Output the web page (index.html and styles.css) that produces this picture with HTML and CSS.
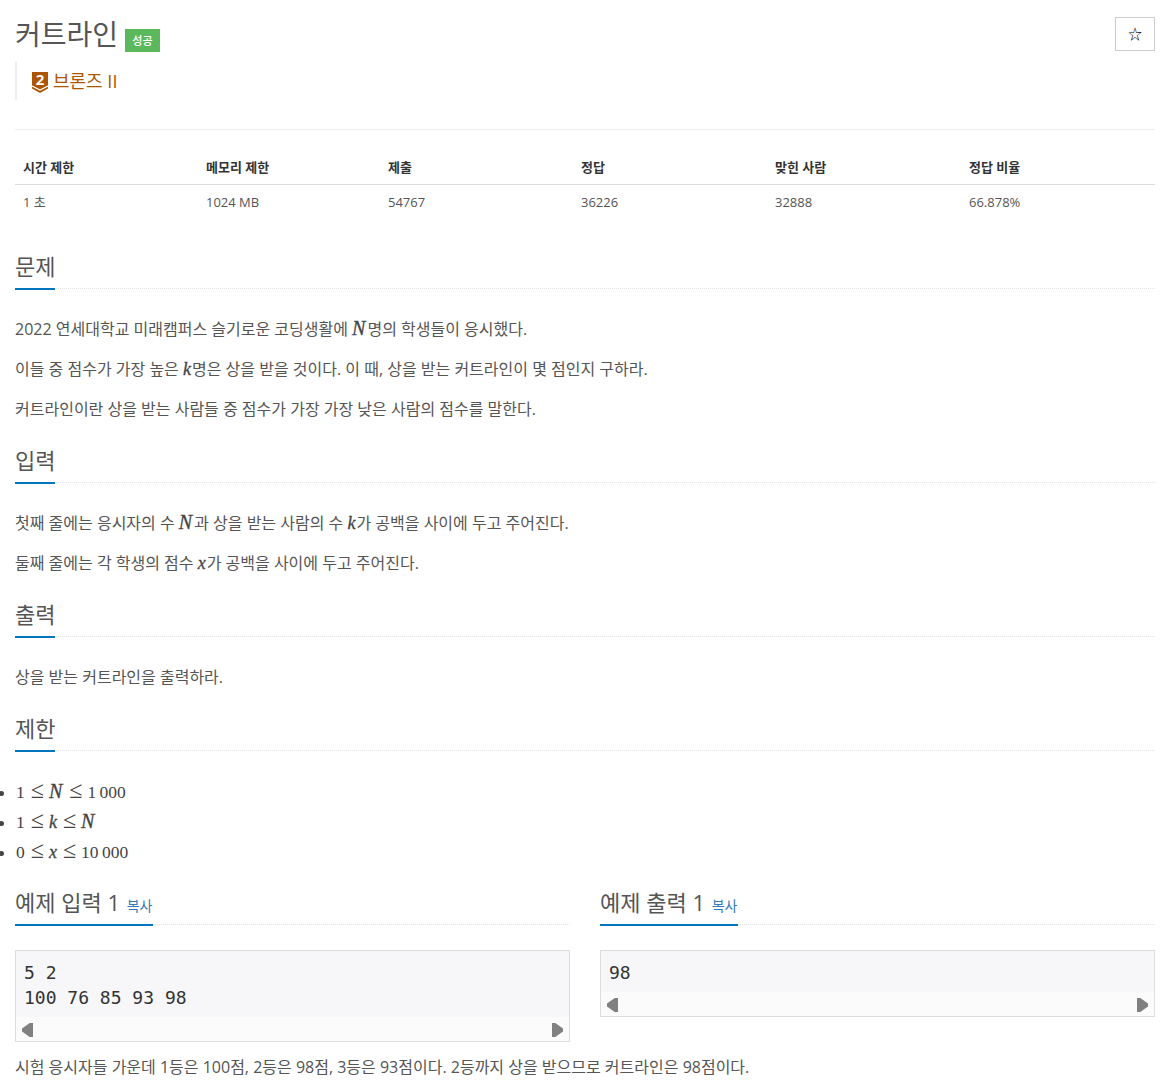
FILE: index.html
```html
<!DOCTYPE html>
<html lang="ko">
<head>
  <meta charset="UTF-8" />
  <meta name="viewport" content="width=device-width, initial-scale=1.0"/>
  <title>커트라인</title>
  <link rel="stylesheet" href="styles.css">
</head>
<body>

  <div class="page-header">
    <h1>커트라인 <span class="label-success">성공</span></h1>
    <button class="star-btn">☆</button>
  </div>

  <blockquote class="tier">
    <svg class="tier-icon" viewBox="0 0 16 21" width="16" height="21">
      <path d="M0 0H16V16.5L8 21L0 16.5Z" fill="#ad5600"/>
      <path d="M0 14L8 18L16 14" fill="none" stroke="#fff" stroke-width="1.3"/>
      <text x="8" y="13" class="tier-num">2</text>
    </svg>
    <span>브론즈 II</span>
  </blockquote>

  <div class="divider"></div>

  <table class="info">
    <colgroup>
      <col class="c1"><col class="c2"><col class="c3"><col class="c4"><col class="c5"><col class="c6">
    </colgroup>
    <thead>
      <tr><th>시간 제한</th><th>메모리 제한</th><th>제출</th><th>정답</th><th>맞힌 사람</th><th>정답 비율</th></tr>
    </thead>
    <tbody>
      <tr><td>1 초</td><td>1024 MB</td><td>54767</td><td>36226</td><td>32888</td><td>66.878%</td></tr>
    </tbody>
  </table>

  <section class="sec first">
    <div class="headline"><h2>문제</h2></div>
    <p>2022 연세대학교 미래캠퍼스 슬기로운 코딩생활에 <i class="m">N</i>명의 학생들이 응시했다.</p>
    <p>이들 중 점수가 가장 높은 <i class="m low">k</i>명은 상을 받을 것이다. 이 때, 상을 받는 커트라인이 몇 점인지 구하라.</p>
    <p>커트라인이란 상을 받는 사람들 중 점수가 가장 가장 낮은 사람의 점수를 말한다.</p>
  </section>

  <section class="sec">
    <div class="headline"><h2>입력</h2></div>
    <p>첫째 줄에는 응시자의 수 <i class="m">N</i>과 상을 받는 사람의 수 <i class="m low">k</i>가 공백을 사이에 두고 주어진다.</p>
    <p>둘째 줄에는 각 학생의 점수 <i class="m low">x</i>가 공백을 사이에 두고 주어진다.</p>
  </section>

  <section class="sec">
    <div class="headline"><h2>출력</h2></div>
    <p>상을 받는 커트라인을 출력하라.</p>
  </section>

  <section class="sec">
    <div class="headline"><h2>제한</h2></div>
    <ul class="limits">
      <li>1<span class="op">≤</span><i class="m">N</i><span class="op">≤</span>1 000</li>
      <li>1<span class="op">≤</span><i class="m low">k</i><span class="op">≤</span><i class="m">N</i></li>
      <li>0<span class="op">≤</span><i class="m low">x</i><span class="op">≤</span>10 000</li>
    </ul>
  </section>

  <div class="samples">
    <div class="sample">
      <div class="headline"><h2>예제 입력 1 <a class="copy">복사</a></h2></div>
      <div class="pre-box">
        <pre>5 2
100 76 85 93 98</pre>
        <div class="scroll"><span class="arrow left"></span><span class="arrow right"></span></div>
      </div>
    </div>
    <div class="sample">
      <div class="headline"><h2>예제 출력 1 <a class="copy">복사</a></h2></div>
      <div class="pre-box">
        <pre>98</pre>
        <div class="scroll"><span class="arrow left"></span><span class="arrow right"></span></div>
      </div>
    </div>
  </div>

  <p class="note">시험 응시자들 가운데 1등은 100점, 2등은 98점, 3등은 93점이다. 2등까지 상을 받으므로 커트라인은 98점이다.</p>

</body>
</html>
```

FILE: styles.css
```css
body {
  margin: 0;
  padding: 0 16px 0 15px;
  color: #555;
  background-color: #fff;
  font-family: 'Open Sans', 'Noto Sans CJK KR', sans-serif;
  font-size: 14px;
  line-height: 20px;
}

.page-header {
  display: flex;
  justify-content: space-between;
  align-items: flex-start;
  padding-top: 17px;
  height: 34px;
}

h1 {
  margin: 0;
  font-size: 28px;
  font-weight: 400;
  line-height: 34px;
}

.label-success {
  display: inline-block;
  background-color: #5cb85c;
  color: #fff;
  font-size: 11px;
  font-weight: 500;
  line-height: 23px;
  height: 23px;
  padding: 0 7px;
  vertical-align: 0;
}

.star-btn {
  width: 40px;
  height: 34px;
  padding: 0 0 3px;
  background-color: #fff;
  border: 1px solid #ccc;
  color: #000;
  font-size: 14px;
  font-family: 'Noto Sans CJK KR', sans-serif;
}

.tier {
  display: flex;
  align-items: center;
  gap: 5px;
  margin: 11px 0 0;
  height: 38px;
  padding-left: 15px;
  border-left: 2px solid #eee;
  color: #ad5600;
  font-size: 18px;
}

.tier-icon {
  flex: none;
  margin-top: 3px;
  overflow: visible;
}

.tier-num {
  fill: #fff;
  font-family: 'Open Sans', sans-serif;
  font-size: 15px;
  font-weight: 700;
  text-anchor: middle;
}

.divider {
  border-top: 1px solid #eee;
  margin-top: 29px;
}

.info {
  width: 100%;
  margin-top: 19px;
  border-collapse: collapse;
  table-layout: fixed;
  font-size: 13px;
}

.c1 { width: 183px; }
.c2 { width: 182px; }
.c3 { width: 193px; }
.c4 { width: 194px; }
.c5 { width: 194px; }

.info th {
  text-align: left;
  padding: 8px 8px 7px;
  color: #333;
  font-weight: 700;
  border-bottom: 1px solid #ddd;
}

.info td {
  padding: 7px 8px;
}

.sec {
  padding-top: 9px;
}

.sec.first {
  padding-top: 34px;
}

.headline {
  border-bottom: 1px dotted #e4e4e4;
  margin-bottom: 29px;
}

h2 {
  width: fit-content;
  margin: 0 0 -2px;
  font-size: 22px;
  font-weight: 400;
  line-height: 26px;
  padding-bottom: 9px;
  border-bottom: 2px solid #0076c0;
}

.sec p {
  margin: 0 0 18px;
  font-size: 16px;
  line-height: 22px;
}

.m {
  margin: 0 2px 0 0;
  font-family: 'Liberation Serif', serif;
  font-size: 20px;
  line-height: 0;
  font-style: italic;
  color: #444;
  -webkit-text-stroke: 0.3px #444;
}

.m.low {
  margin-right: 1px;
  font-size: 18px;
}

.sec .limits {
  margin: -3px 0 0;
  padding: 0 0 0 1px;
  font-family: 'Liberation Serif', serif;
  font-size: 17.5px;
  line-height: 30px;
  word-spacing: -1px;
  color: #444;
}

.limits .m {
  margin-right: 1px;
}

.limits .m.low {
  margin-right: 0;
}

.op {
  margin: 0 5px 0 6px;
  font-size: 24px;
  line-height: 0;
}

.samples {
  display: grid;
  grid-template-columns: 555px 555px;
  gap: 30px;
  margin-top: 22px;
}

.samples .headline {
  margin-bottom: 25px;
}

.sample {
  align-self: start;
}

.copy {
  font-size: 14px;
  line-height: 0;
  color: #337ab7;
  margin-left: 1px;
  padding-right: 1px;
}

.pre-box {
  border: 1px solid #ddd;
  background-color: #f7f7f9;
}

.pre-box pre {
  margin: 0;
  padding: 9px 8px 7px;
  font-family: 'DejaVu Sans Mono', monospace;
  font-size: 18px;
  line-height: 25px;
  color: #333;
}

.scroll {
  display: flex;
  justify-content: space-between;
  align-items: center;
  height: 24px;
  padding: 0 6px;
  background-color: #fbfbfb;
}

.arrow {
  width: 11px;
  height: 14px;
  margin-top: 2px;
  background-color: #808080;
}

.arrow.left {
  clip-path: polygon(100% 0, 100% 100%, 70% 100%, 0 60%, 0 40%, 70% 0);
}

.arrow.right {
  clip-path: polygon(0 0, 30% 0, 100% 40%, 100% 60%, 30% 100%, 0 100%);
}

.note {
  margin: 14px 0 0;
  font-size: 16px;
  line-height: 22px;
}
```
